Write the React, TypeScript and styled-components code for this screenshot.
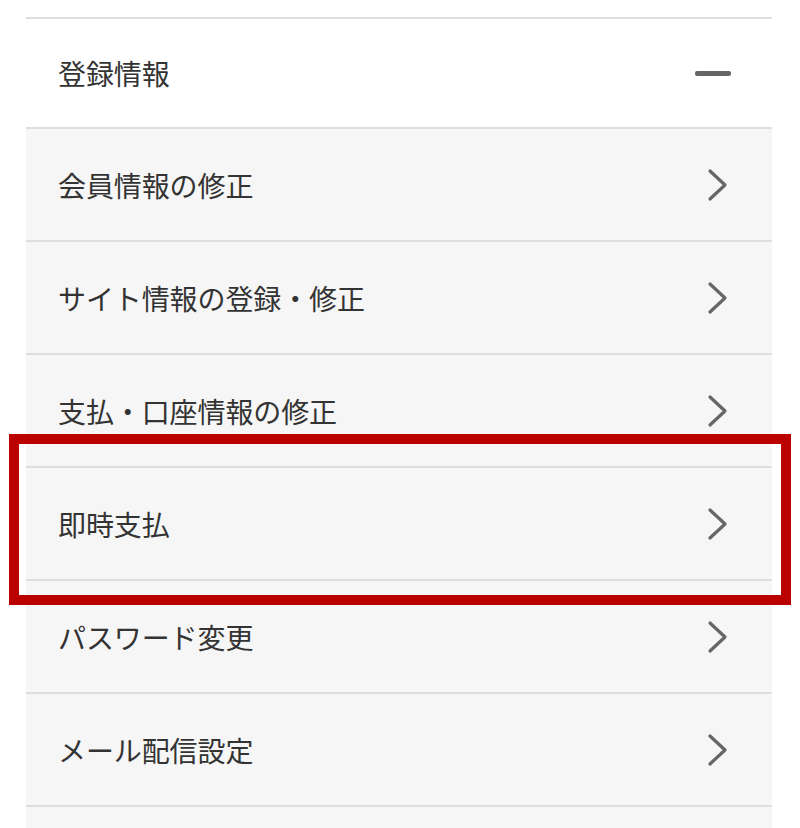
import React from 'react';
import styled, { createGlobalStyle } from 'styled-components';

const GlobalStyle = createGlobalStyle`
	html, body {
		margin: 0;
		padding: 0;
		background: #ffffff;
	}
	body {
		font-family: "Noto Sans CJK JP", "Noto Sans", sans-serif;
		color: #333333;
	}
`;

const Page = styled.div`
	position: relative;
	width: 800px;
	height: 828px;
	overflow: hidden;
	padding: 17px 28px 0 26px;
	box-sizing: border-box;
`;

const Panel = styled.div`
	display: flex;
	flex-direction: column;
	border-top: 2px solid #dedede;
`;

const Header = styled.div`
	height: 108px;
	display: flex;
	align-items: center;
	justify-content: space-between;
	padding: 0 41px 0 32px;
	background: #ffffff;
	border-bottom: 2px solid #dedede;
`;

const Row = styled.div`
	height: 111px;
	display: flex;
	align-items: center;
	justify-content: space-between;
	padding: 0 43px 0 32px;
	background: #f6f6f6;
	border-bottom: 2px solid #dedede;
`;

const Filler = styled.div`
	height: 40px;
	background: #f6f6f6;
`;

const Label = styled.span`
	font-size: 28px;
	line-height: 1;
	color: #333333;
	letter-spacing: -0.1px;
`;

const Minus = styled.span`
	display: block;
	width: 36px;
	height: 5px;
	border-radius: 2px;
	background: #666666;
`;

const Highlight = styled.div`
	position: absolute;
	left: 9px;
	top: 434px;
	width: 782px;
	height: 171px;
	border: 10px solid #bb0000;
	box-sizing: border-box;
	pointer-events: none;
`;

const Chevron = () => (
	<svg width="22" height="34" viewBox="0 0 22 34" fill="none">
		<path
			d="M3 3 L18 17 L3 31"
			stroke="#666666"
			strokeWidth="3.2"
			strokeLinecap="round"
			strokeLinejoin="round"
		/>
	</svg>
);

const items = [
	'会員情報の修正',
	'サイト情報の登録・修正',
	'支払・口座情報の修正',
	'即時支払',
	'パスワード変更',
	'メール配信設定',
];

const App = () => {
	return (
		<>
			<GlobalStyle />
			<Page>
				<Panel>
					<Header>
						<Label>登録情報</Label>
						<Minus />
					</Header>
					{items.map((item) => (
						<Row key={item}>
							<Label>{item}</Label>
							<Chevron />
						</Row>
					))}
					<Filler />
				</Panel>
				<Highlight />
			</Page>
		</>
	);
};

export default App;
